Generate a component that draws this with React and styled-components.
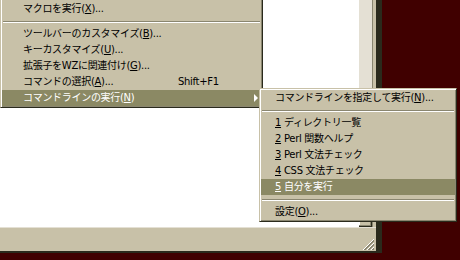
import React from 'react';
import styled, { createGlobalStyle } from 'styled-components';

const face = '#c8c1a8';
const light = '#e4e0d4';
const shadow = '#8a8670';
const dark = '#2a2a1c';
const select = '#8b8964';

const GlobalStyle = createGlobalStyle`
    html, body {
        margin: 0;
        padding: 0;
        overflow: hidden;
        background: #400000;
    }
    body {
        font-family: "DejaVu Sans", "Noto Sans CJK JP", sans-serif;
        font-size: 10px;
        letter-spacing: -0.3px;
    }
`;

const Desktop = styled.div`
    position: relative;
    width: 460px;
    height: 260px;
    background: #400000;
    overflow: hidden;
`;

const Window = styled.div`
    width: 376px;
    height: 251px;
    display: flex;
    flex-direction: column;
    background: ${face};
    border-right: 5px solid ${dark};
    border-bottom: 2px solid ${dark};
    box-shadow: inset -1px -1px 0 ${shadow}, 1px 0 0 ${dark};
    box-sizing: content-box;
`;

const Body = styled.div`
    flex: 1;
    display: flex;
`;

const Editor = styled.div`
    flex: 1;
    background: #ffffff;
`;

const ScrollBar = styled.div`
    width: 13px;
    display: flex;
    flex-direction: column;
    background: ${light};
`;

const Track = styled.div`
    flex: 1;
`;

const ScrollButton = styled.div`
    height: 14px;
    background: ${face};
    border-bottom: 1px solid ${dark};
    border-right: 1px solid ${dark};
    box-shadow: inset -1px -1px 0 ${shadow}, inset 1px 1px 0 #fff;
`;

const WindowEdge = styled.div`
    width: 3px;
    background: ${face};
    border-left: 1px solid ${shadow};
`;

const StatusBar = styled.div`
    height: 22px;
    display: flex;
    justify-content: flex-end;
    align-items: flex-end;
    border-top: 1px solid ${light};
    background: ${face};
    padding: 0 2px 1px 0;
`;

const Menu = styled.div`
    position: absolute;
    left: ${(p) => p.$left}px;
    top: ${(p) => p.$top}px;
    width: ${(p) => p.$width}px;
    box-sizing: border-box;
    background: ${face};
    border: 1px solid;
    border-color: ${face} ${dark} ${dark} ${face};
    box-shadow: inset 1px 1px 0 #fff, inset -1px -1px 0 ${shadow};
    padding: ${(p) => p.$padTop || 1}px 1px 1px 1px;
    display: flex;
    flex-direction: column;
`;

const Item = styled.div`
    height: 16px;
    display: flex;
    align-items: center;
    padding-left: ${(p) => p.$indent}px;
    background: ${(p) => (p.$active ? select : 'transparent')};
    color: ${(p) => (p.$active ? '#ffffff' : '#000000')};
    white-space: nowrap;
    line-height: 16px;
`;

const Label = styled.span`
    width: ${(p) => (p.$width ? `${p.$width}px` : 'auto')};
    flex: ${(p) => (p.$width ? 'none' : '1')};
`;

const Key = styled.span`
    flex: 1;
`;

const Arrow = styled.span`
    width: 0;
    height: 0;
    margin-right: 3px;
    border-top: 4px solid transparent;
    border-bottom: 4px solid transparent;
    border-left: 4px solid currentColor;
`;

const U = styled.span`
    text-decoration: underline;
    text-underline-offset: 1px;
`;

const Separator = styled.div`
    height: 9px;
    display: flex;
    align-items: flex-start;
    padding: 4px 1px 0;
    box-sizing: border-box;

    &::after {
        content: '';
        flex: 1;
        height: 0;
        border-top: 1px solid ${shadow};
        border-bottom: 1px solid #ffffff;
    }
`;

function Grip() {
    return (
        <svg width="12" height="12" viewBox="0 0 12 12">
            {[0, 4, 8].map((o) => (
                <g key={o}>
                    <line x1={o + 1} y1="12" x2="12" y2={o + 1} stroke="#ffffff" strokeWidth="1" />
                    <line x1={o + 2} y1="12" x2="12" y2={o + 2} stroke={shadow} strokeWidth="1" />
                    <line x1={o + 3} y1="12" x2="12" y2={o + 3} stroke={shadow} strokeWidth="1" />
                </g>
            ))}
        </svg>
    );
}

export default function App() {
    return (
        <Desktop>
            <GlobalStyle />
            <Window>
                <Body>
                    <Editor />
                    <ScrollBar>
                        <Track />
                        <ScrollButton />
                    </ScrollBar>
                    <WindowEdge />
                </Body>
                <StatusBar>
                    <Grip />
                </StatusBar>
            </Window>

            <Menu $left={0} $top={-19} $width={263} $padTop={19}>
                <Item $indent={21}>マクロを実行(<U>X</U>)...</Item>
                <Separator />
                <Item $indent={21}>ツールバーのカスタマイズ(<U>B</U>)...</Item>
                <Item $indent={21}>キーカスタマイズ(<U>U</U>)...</Item>
                <Item $indent={21}>拡張子をWZに関連付け(<U>G</U>)...</Item>
                <Item $indent={21}>
                    <Label $width={155}>コマンドの選択(<U>A</U>)...</Label>
                    <Key>Shift+F1</Key>
                </Item>
                <Item $indent={21} $active>
                    <Label>コマンドラインの実行(<U>N</U>)</Label>
                    <Arrow />
                </Item>
            </Menu>

            <Menu $left={259} $top={88} $width={198}>
                <Item $indent={14}>コマンドラインを指定して実行(<U>N</U>)...</Item>
                <Separator />
                <Item $indent={14}><U>1</U>&nbsp;ディレクトリ一覧</Item>
                <Item $indent={14}><U>2</U>&nbsp;Perl 関数ヘルプ</Item>
                <Item $indent={14}><U>3</U>&nbsp;Perl 文法チェック</Item>
                <Item $indent={14}><U>4</U>&nbsp;CSS 文法チェック</Item>
                <Item $indent={14} $active><U>5</U>&nbsp;自分を実行</Item>
                <Separator />
                <Item $indent={14}>設定(<U>O</U>)...</Item>
            </Menu>
        </Desktop>
    );
}
